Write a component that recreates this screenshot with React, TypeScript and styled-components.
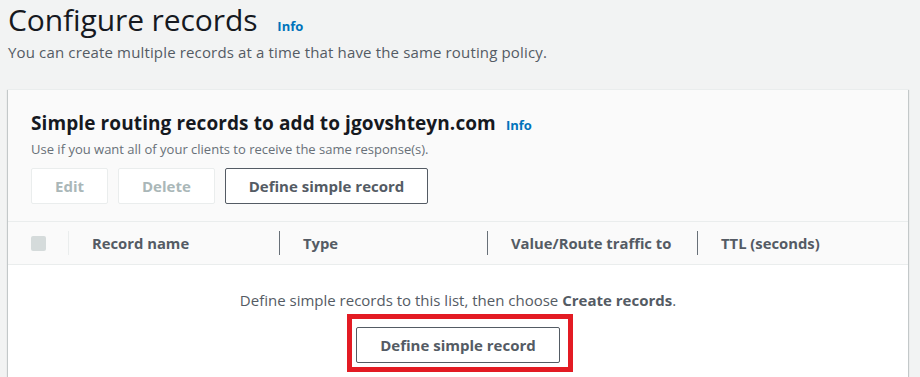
import React from "react";
import styled, { createGlobalStyle } from "styled-components";

const Global = createGlobalStyle`
  html, body { margin: 0; padding: 0; background: #f2f3f3; }
  body { font-family: "Open Sans", "Noto Sans", sans-serif; color: #16191f; overflow: hidden; }
  *, *::before, *::after { box-sizing: border-box; }
`;

const Page = styled.div`
  padding: 0 0 0 8px;
  width: 920px;
`;

const TitleRow = styled.div`
  display: flex;
  align-items: baseline;
  gap: 20px;
`;

const Title = styled.h1`
  margin: 0;
  font-size: 30px;
  line-height: 40px;
  font-weight: 400;
  color: #16191f;
  letter-spacing: -0.1px;
`;

const InfoLink = styled.a`
  font-size: 13px;
  font-weight: 700;
  color: #0073bb;
  text-decoration: none;
`;

const Subtitle = styled.p`
  margin: 2px 0 0;
  font-size: 15px;
  line-height: 20px;
  letter-spacing: 0.15px;
  color: #545b64;
`;

const Card = styled.section`
  margin-top: 27px;
  width: 900px;
  background: #ffffff;
  box-shadow: 0 1px 1px 0 rgba(0, 28, 36, 0.3), 1px 1px 1px 0 rgba(0, 28, 36, 0.15),
    -1px 1px 1px 0 rgba(0, 28, 36, 0.15);
  border-top: 1px solid #eaeded;
`;

const CardHeader = styled.div`
  background: #fafafa;
  padding: 21px 23px 17px;
  border-bottom: 1px solid #eaeded;
`;

const HeadingRow = styled.div`
  display: flex;
  align-items: baseline;
  gap: 10px;
`;

const Heading = styled.h2`
  margin: 0;
  font-size: 19px;
  line-height: 24px;
  font-weight: 700;
  letter-spacing: 0.1px;
  color: #16191f;
`;

const Description = styled.p`
  margin: 5px 0 0;
  font-size: 13px;
  line-height: 18px;
  color: #687078;
`;

const Actions = styled.div`
  display: flex;
  gap: 10px;
  margin-top: 10px;
`;

const Button = styled.button<{ $disabled?: boolean }>`
  height: 36px;
  padding: 0 23px;
  font-family: inherit;
  font-size: 15px;
  font-weight: 700;
  background: #ffffff;
  border-radius: 2px;
  border: 1px solid ${(p) => (p.$disabled ? "#eaeded" : "#545b64")};
  color: ${(p) => (p.$disabled ? "#aab7b8" : "#545b64")};
  cursor: ${(p) => (p.$disabled ? "default" : "pointer")};
`;

const TableHead = styled.div`
  display: grid;
  grid-template-columns: 37px 211px 208px 210px 1fr;
  align-items: center;
  height: 43px;
  padding-left: 23px;
  background: #fafafa;
  border-bottom: 1px solid #eaeded;
`;

const HeadCell = styled.div<{ $sep?: "light" | "dark" }>`
  display: flex;
  align-items: center;
  height: 24px;
  padding-left: 23px;
  font-size: 14.8px;
  font-weight: 700;
  color: #545b64;
  border-left: ${(p) =>
    p.$sep === "light" ? "1px solid #eaeded" : p.$sep === "dark" ? "1px solid #687078" : "none"};
`;

const CheckCell = styled.div`
  display: flex;
  align-items: center;
  height: 24px;
`;

const Checkbox = styled.span`
  display: inline-block;
  width: 15px;
  height: 15px;
  border-radius: 2px;
  background: #d5dbdb;
`;

const Empty = styled.div`
  display: flex;
  flex-direction: column;
  align-items: center;
  padding: 25px 0 30px;
  background: #ffffff;
`;

const EmptyText = styled.p`
  margin: 0;
  font-size: 15px;
  line-height: 20px;
  color: #545b64;
  b { font-weight: 700; }
`;

const Highlight = styled.div`
  position: relative;
  margin-top: 17px;
  &::after {
    content: "";
    position: absolute;
    left: -9px;
    top: -13px;
    width: 226px;
    height: 58px;
    border: 5px solid #e31b23;
    pointer-events: none;
  }
`;

export default function App() {
  return (
    <>
      <Global />
      <Page>
        <TitleRow>
          <Title>Configure records</Title>
          <InfoLink href="#">Info</InfoLink>
        </TitleRow>
        <Subtitle>You can create multiple records at a time that have the same routing policy.</Subtitle>
        <Card>
          <CardHeader>
            <HeadingRow>
              <Heading>Simple routing records to add to jgovshteyn.com</Heading>
              <InfoLink href="#">Info</InfoLink>
            </HeadingRow>
            <Description>Use if you want all of your clients to receive the same response(s).</Description>
            <Actions>
              <Button $disabled>Edit</Button>
              <Button $disabled>Delete</Button>
              <Button>Define simple record</Button>
            </Actions>
          </CardHeader>
          <TableHead>
            <CheckCell>
              <Checkbox />
            </CheckCell>
            <HeadCell $sep="light">Record name</HeadCell>
            <HeadCell $sep="dark">Type</HeadCell>
            <HeadCell $sep="dark">Value/Route traffic to</HeadCell>
            <HeadCell $sep="dark">TTL (seconds)</HeadCell>
          </TableHead>
          <Empty>
            <EmptyText>
              Define simple records to this list, then choose <b>Create records</b>.
            </EmptyText>
            <Highlight>
              <Button>Define simple record</Button>
            </Highlight>
          </Empty>
        </Card>
      </Page>
    </>
  );
}
